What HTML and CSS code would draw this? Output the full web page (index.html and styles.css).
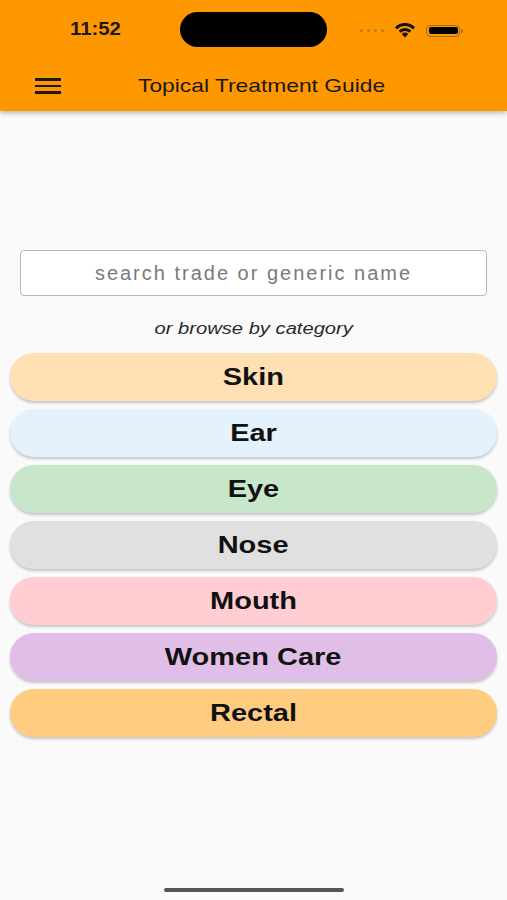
FILE: index.html
```html
<!DOCTYPE html>
<html lang="en">
<head>
    <meta charset="UTF-8">
    <meta name="viewport" content="width=device-width, initial-scale=1.0">
    <title>Topical Treatment Guide</title>
    <link rel="stylesheet" href="styles.css">
</head>
<body>

<header class="topbar">
    <div class="status">
        <span class="time"><span class="wide">11:52</span></span>
        <span class="island"></span>
        <span class="status-icons">
            <span class="dots"><i></i><i></i><i></i><i></i></span>
            <svg class="wifi" width="22" height="16" viewBox="0 0 22 16">
                <path d="M11 15.5l3.2-3.6a4.6 4.6 0 0 0-6.4 0z" fill="#111"/>
                <path d="M4.6 8.6l2 2.2a6.3 6.3 0 0 1 8.8 0l2-2.2a9.2 9.2 0 0 0-12.8 0z" fill="#111"/>
                <path d="M1 5.2l2 2.2a11.2 11.2 0 0 1 16 0l2-2.2a14.2 14.2 0 0 0-20 0z" fill="#111"/>
            </svg>
            <span class="battery"><span class="level"></span></span>
        </span>
    </div>
    <div class="appbar">
        <button class="menu" aria-label="Menu">
            <span></span><span></span><span></span>
        </button>
        <h1><span class="wide">Topical Treatment Guide</span></h1>
    </div>
</header>

<main class="content">
    <input class="search" type="text" placeholder="search trade or generic name">
    <p class="browse"><span class="wide">or browse by category</span></p>

    <div class="categories">
        <button class="cat skin"><span class="wide">Skin</span></button>
        <button class="cat ear"><span class="wide">Ear</span></button>
        <button class="cat eye"><span class="wide">Eye</span></button>
        <button class="cat nose"><span class="wide">Nose</span></button>
        <button class="cat mouth"><span class="wide">Mouth</span></button>
        <button class="cat women"><span class="wide">Women Care</span></button>
        <button class="cat rectal"><span class="wide">Rectal</span></button>
    </div>
</main>

<div class="home-bar"></div>

</body>
</html>
```

FILE: styles.css
```css
body {
    font-family: "Liberation Sans", Arial, sans-serif;
    margin: 0;
    padding: 0;
    background-color: #fafafa;
    width: 507px;
    height: 900px;
    overflow: hidden;
    position: relative;
}
/* the screenshot is stretched sideways, so the text is too */
.wide {
    display: inline-block;
    transform: scaleX(1.26);
}
.topbar {
    background-color: #ff9800;
    height: 111px;
    box-shadow: 0 2px 5px rgba(0, 0, 0, 0.28);
    position: relative;
    z-index: 1;
}
.status {
    display: flex;
    align-items: center;
    height: 35px;
    padding-top: 12px;
}
.time {
    width: 180px;
    padding-left: 70px;
    box-sizing: border-box;
    font-size: 18px;
    font-weight: bold;
    color: #1a1a1a;
}
.time .wide {
    transform: scaleX(1.13);
    transform-origin: left center;
}
.island {
    width: 147px;
    height: 35px;
    border-radius: 18px;
    background-color: #000;
}
.status-icons {
    display: flex;
    align-items: center;
    margin-left: 33px;
    padding-top: 2px;
}
.dots {
    display: flex;
    gap: 4px;
    margin-right: 10px;
}
.dots i {
    width: 3px;
    height: 3px;
    border-radius: 50%;
    background-color: #c47a1a;
}
.wifi {
    margin-right: 10px;
    margin-top: -2px;
}
.battery {
    width: 34px;
    height: 12px;
    border: 1.5px solid #a06e10;
    border-radius: 4px;
    padding: 1.5px;
    box-sizing: border-box;
    position: relative;
}
.battery::after {
    content: "";
    position: absolute;
    right: -4px;
    top: 3px;
    width: 2px;
    height: 4px;
    border-radius: 0 2px 2px 0;
    background-color: #a06e10;
}
.battery .level {
    display: block;
    width: 100%;
    height: 100%;
    border-radius: 2px;
    background-color: #000;
}
.appbar {
    display: flex;
    align-items: center;
    height: 52px;
    padding-top: 13px;
}
.menu {
    background: none;
    border: none;
    padding: 0;
    margin-left: 35px;
    width: 26px;
    display: flex;
    flex-direction: column;
    gap: 4px;
}
.menu span {
    display: block;
    height: 2.5px;
    background-color: #1a1a1a;
}
.appbar h1 {
    margin: 0 0 0 77px;
    font-size: 19px;
    font-weight: 500;
    color: #1a1a1a;
}
.appbar h1 .wide {
    transform: scaleX(1.2);
    transform-origin: left center;
}
.content {
    padding-top: 139px;
}
.search {
    display: block;
    margin: 0 20px;
    width: 467px;
    height: 46px;
    box-sizing: border-box;
    border: 1px solid #b8b8b8;
    border-radius: 4px;
    background-color: white;
    font-family: inherit;
    font-size: 20px;
    text-align: center;
    letter-spacing: 2px;
}
.search::placeholder {
    color: #7a7a7a;
}
.browse {
    margin: 23px 0 14px;
    text-align: center;
    font-size: 16px;
    font-style: italic;
    color: #2a2a2a;
    line-height: 20px;
}
.categories {
    display: flex;
    flex-direction: column;
    gap: 8px;
    padding: 0 10px;
}
.cat {
    height: 48px;
    padding-top: 2px;
    border: none;
    border-radius: 24px;
    font-family: inherit;
    font-size: 23px;
    font-weight: bold;
    color: #111;
    box-shadow: 0 2px 3px rgba(0, 0, 0, 0.22);
}
.skin { background-color: #ffe0b2; }
.ear { background-color: #e3f2fd; }
.eye { background-color: #c8e6c9; }
.nose { background-color: #e0e0e0; }
.mouth { background-color: #ffcdd2; }
.women { background-color: #e1bee7; }
.rectal { background-color: #ffcc80; }
.home-bar {
    position: absolute;
    left: 164px;
    bottom: 8px;
    width: 180px;
    height: 4px;
    border-radius: 2px;
    background-color: #555;
}
```
